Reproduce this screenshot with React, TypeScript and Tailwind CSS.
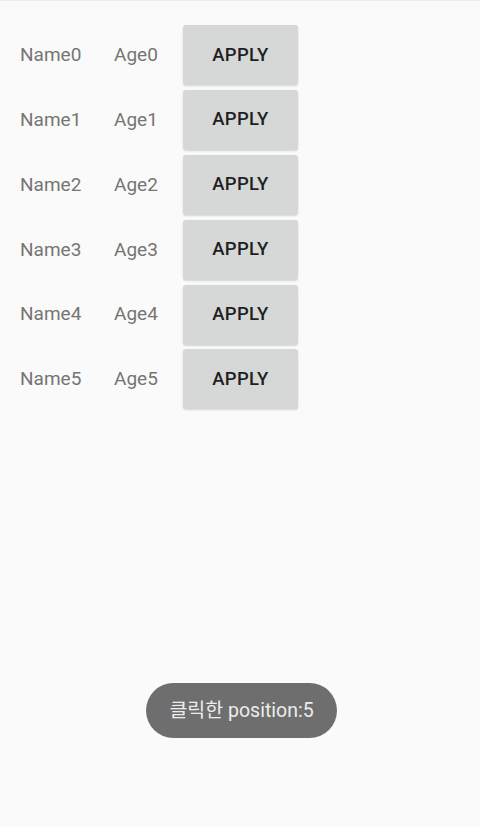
const rows = [0, 1, 2, 3, 4, 5]

export default function App() {
  return (
    <div
      className="relative w-[480px] h-[827px] bg-[#fafafa] border-t border-[#ececec] overflow-hidden"
      style={{ fontFamily: 'Roboto, "Noto Sans CJK KR", sans-serif' }}
    >
      <div className="pt-[22px] flex flex-col">
        {rows.map((i) => (
          <div key={i} className="flex items-center h-[64.8px] pl-[20px]">
            <span className="w-[94px] text-[19px] text-[#757575]">Name{i}</span>
            <span className="w-[69px] text-[19px] text-[#757575]">Age{i}</span>
            <button className="w-[115px] h-[60px] rounded-[3px] bg-[#d6d7d7] shadow-[0_1px_2px_rgba(0,0,0,0.15)] text-[18.5px] font-medium text-[#1f1f1f] tracking-[0.3px]">
              APPLY
            </button>
          </div>
        ))}
      </div>
      <div className="absolute left-[146px] top-[682px] w-[191px] h-[55px] rounded-full bg-[#6e6e6e] flex items-center justify-center text-[19.5px] text-[#ececec]">
        클릭한 position:5
      </div>
    </div>
  )
}
